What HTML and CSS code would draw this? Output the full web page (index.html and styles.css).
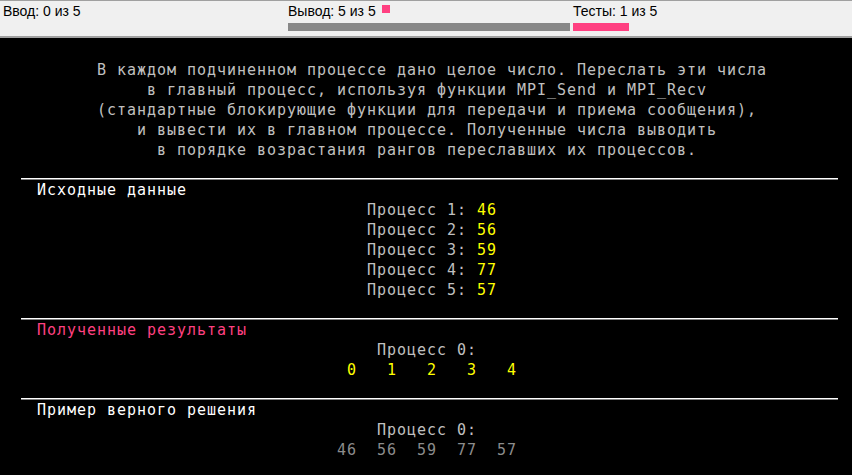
FILE: index.html
```html
<!DOCTYPE html>
<html lang="ru">
<head>
<meta charset="utf-8">
<title>MPI Send/Recv</title>
<link rel="stylesheet" href="styles.css">
</head>
<body>
<header class="topbar">
  <div class="stat">
    <div class="label">Ввод: 0 из 5</div>
  </div>
  <div class="stat">
    <div class="label">Вывод: 5 из 5<span class="flag"></span></div>
    <div class="bar"><div class="fill fill-gray" style="width:100%"></div></div>
  </div>
  <div class="stat">
    <div class="label">Тесты: 1 из 5</div>
    <div class="bar"><div class="fill fill-pink" style="width:20%"></div></div>
  </div>
</header>
<main class="screen">
  <div class="rows desc">
    <div class="line">         В каждом подчиненном процессе дано целое число. Переслать эти числа</div>
    <div class="line">              в главный процесс, используя функции MPI_Send и MPI_Recv</div>
    <div class="line">         (стандартные блокирующие функции для передачи и приема сообщения),</div>
    <div class="line">             и вывести их в главном процессе. Полученные числа выводить</div>
    <div class="line">               в порядке возрастания рангов переславших их процессов.</div>
  </div>
  <div class="rule"></div>
  <section class="rows section">
    <div class="line title">   Исходные данные</div>
    <div class="line">                                    Процесс 1: <span class="num">46</span></div>
    <div class="line">                                    Процесс 2: <span class="num">56</span></div>
    <div class="line">                                    Процесс 3: <span class="num">59</span></div>
    <div class="line">                                    Процесс 4: <span class="num">77</span></div>
    <div class="line">                                    Процесс 5: <span class="num">57</span></div>
  </section>
  <div class="rule"></div>
  <section class="rows section">
    <div class="line title title-error">   Полученные результаты</div>
    <div class="line">                                     Процесс 0:</div>
    <div class="line num">                                  0   1   2   3   4</div>
  </section>
  <div class="rule"></div>
  <section class="rows section">
    <div class="line title">   Пример верного решения</div>
    <div class="line">                                     Процесс 0:</div>
    <div class="line sample">                                 46  56  59  77  57</div>
  </section>
</main>
</body>
</html>
```
FILE: styles.css
```css
html, body {
  margin: 0;
  padding: 0;
  background: #000;
}

.topbar {
  display: grid;
  grid-template-columns: 285px 285px 1fr;
  height: 35px;
  background: #f0f0f0;
  border-top: 1px solid #a0a0a0;
  border-bottom: 2px solid #a0a0a0;
  font-family: "Liberation Sans", Arial, sans-serif;
  font-size: 14px;
  color: #000;
}

.stat {
  padding: 1px 0 0 3px;
}

.label {
  line-height: 16px;
  white-space: nowrap;
  margin-top: 1px;
}

.flag {
  display: inline-block;
  width: 8px;
  height: 8px;
  margin: 2px 0 0 6px;
  vertical-align: top;
  background: #ff4081;
}

.bar {
  margin-top: 4px;
  height: 8px;
}

.fill {
  height: 8px;
}

.fill-gray {
  background: #888888;
}

.fill-pink {
  background: #ff4081;
}

.screen {
  padding-top: 22px;
  padding-left: 7px;
}

.rows {
  display: flex;
  flex-direction: column;
  font-family: "DejaVu Sans Mono", monospace;
  font-size: 15px;
  letter-spacing: 0.97px;
  line-height: 20px;
  color: #c0c0c0;
}

.line {
  height: 20px;
  white-space: pre;
}

.desc {
  margin-bottom: 18px;
}

.rule {
  height: 0;
  margin: 0 14px 0 14px;
  border-top: 1px solid #ffffff;
  border-bottom: 1px solid #808080;
}

.section {
  margin-bottom: 18px;
}

.title {
  color: #ffffff;
}

.title-error {
  color: #ff4081;
}

.num {
  color: #ffff00;
}

.sample {
  color: #8c8c8c;
}
```
